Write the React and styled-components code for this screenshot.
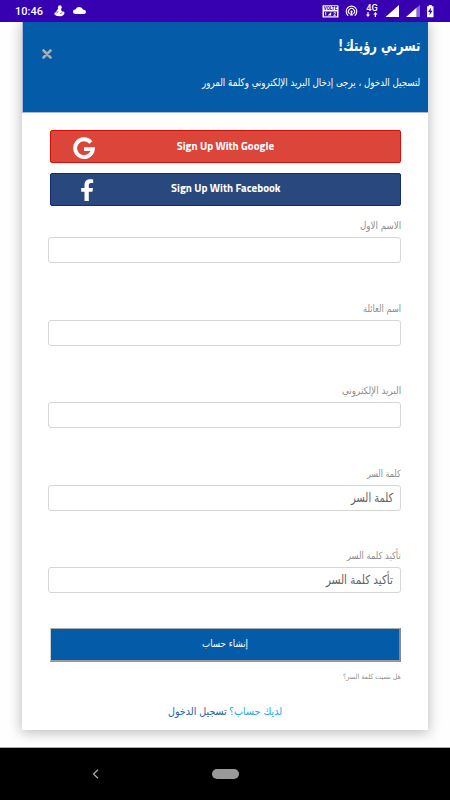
import React, { useLayoutEffect, useRef, useState } from 'react';
import styled, { createGlobalStyle } from 'styled-components';

const GlobalStyle = createGlobalStyle`
  * { box-sizing: border-box; }
  body { margin: 0; background: #fff; font-family: "DejaVu Sans", sans-serif; overflow: hidden; }
  button, input { font-family: inherit; }
`;

const Screen = styled.div`
  width: 450px;
  height: 800px;
  display: flex;
  flex-direction: column;
  background: #fefefe;
  overflow: hidden;
`;

const StatusBar = styled.header`
  height: 22px;
  flex: none;
  display: flex;
  align-items: center;
  background: #3700b0;
  color: #fff;
  padding: 0 15px;
  position: relative;
  z-index: 1;
`;

const Clock = styled.span`
  width: 40px;
  font: 500 11px/22px Roboto, sans-serif;
  letter-spacing: 0;
  padding-top: 1px;
`;

const StatusIcons = styled.svg`
  display: block;
  flex: none;
  margin-left: ${(p) => p.$gap || 0}px;
`;

const Page = styled.main`
  height: 725px;
  flex: none;
  display: flex;
  justify-content: center;
  align-items: flex-start;
`;

const Card = styled.section`
  width: 406px;
  height: 708px;
  display: flex;
  flex-direction: column;
  background: #fff;
  box-shadow: 0 2px 12px 1px rgba(0, 0, 0, 0.25);
`;

const CardHeader = styled.div`
  height: 90.5px;
  flex: none;
  display: flex;
  align-items: flex-start;
  justify-content: space-between;
  padding: 0 8px 0 19px;
  background: #045ca8;
  border: 1px solid #a9b5dc;
  border-width: 0 0 1px 1px;
  color: #fff;
`;

const CloseButton = styled.button`
  display: block;
  margin: 27px 0 0;
  padding: 0;
  border: 0;
  background: none;
  svg { display: block; }
`;

const Heading = styled.div`
  display: flex;
  flex-direction: column;
  align-items: flex-end;
  padding-top: 12px;
  gap: 15px;
`;

const Body = styled.div`
  display: flex;
  flex-direction: column;
  padding: 17.5px 27px 0 26px;
`;

const SocialButton = styled.button`
  height: 33px;
  margin: 0 0 ${(p) => p.$after}px 2px;
  padding: 0 0 0 ${(p) => p.$inset}px;
  display: grid;
  grid-template-columns: 24px 1fr 45px;
  align-items: center;
  justify-items: center;
  background: ${(p) => p.$fill};
  border: 1px solid ${(p) => p.$edge};
  border-radius: 2px;
  color: #fff;
  svg { display: block; position: relative; top: 1px; }
`;

const Field = styled.label`
  height: 82.5px;
  display: flex;
  flex-direction: column;
  align-items: flex-end;
`;

const LabelRow = styled.span`
  height: 22px;
  display: flex;
  align-items: center;
  color: #8c8c8c;
`;

const InputBox = styled.span`
  width: 100%;
  height: 26px;
  display: flex;
  align-items: center;
  justify-content: flex-end;
  padding: 0 7px;
  background: #fff;
  border: 1px solid #d6d6d6;
  border-radius: 3px;
  color: #626262;
`;

const Submit = styled.button`
  height: 34px;
  margin: 0 0 0 2px;
  padding: 0 0 1px;
  display: flex;
  align-items: center;
  justify-content: center;
  background: #045ca8;
  border: 1px solid #c4c4c4;
  border-width: 1px 2px 2px 1px;
  border-color: #aaa #888 #999 #ccc;
  color: #fff;
`;

const Forgot = styled.a`
  height: 31px;
  display: flex;
  align-items: center;
  justify-content: flex-end;
  color: #929292;
`;

const SignIn = styled.p`
  margin: 9px 0 0;
  height: 20px;
  display: flex;
  align-items: center;
  justify-content: center;
  gap: 3px;
  padding-left: 1px;
`;

const NavBar = styled.nav`
  flex: 1;
  display: flex;
  align-items: center;
  padding-left: 92px;
  background: #000;
  border-top: 1px solid #aaa;
`;

const HomePill = styled.span`
  width: 27px;
  height: 10px;
  margin-left: 113px;
  border-radius: 5px;
  background: #999;
`;

const FitBox = styled.span`
  display: flex;
  justify-content: flex-end;
  flex: none;
  width: ${(p) => p.$width}px;
  height: ${(p) => p.$size * 1.6}px;
  line-height: ${(p) => p.$size * 1.6}px;
  font-size: ${(p) => p.$size}px;
  font-weight: ${(p) => (p.$bold ? 700 : 400)};
  font-family: ${(p) => p.$font || '"DejaVu Sans", sans-serif'};
  color: ${(p) => p.$color || 'inherit'};
`;

const FitInner = styled.span`
  flex: none;
  white-space: nowrap;
  transform-origin: right center;
`;

/* Condenses a single line of text to a given measure. */
function FitText({ width, size, bold, font, color, dir = 'rtl', children }) {
  const ref = useRef(null);
  const [scale, setScale] = useState(1);
  useLayoutEffect(() => {
    setScale(width / ref.current.offsetWidth);
  }, [width, children]);
  return (
    <FitBox $width={width} $size={size} $bold={bold} $font={font} $color={color}>
      <FitInner ref={ref} dir={dir} style={{ transform: `scaleX(${scale})` }}>{children}</FitInner>
    </FitBox>
  );
}

const fields = [
  { label: 'الاسم الاول', width: 41 },
  { label: 'اسم العائلة', width: 38 },
  { label: 'البريد الإلكتروني', width: 59 },
  { label: 'كلمة السر', width: 34, hint: 'كلمة السر', hintWidth: 42 },
  { label: 'تأكيد كلمة السر', width: 54, hint: 'تأكيد كلمة السر', hintWidth: 67 },
];

const latin = '"Titillium Web", "Noto Sans", sans-serif';

export default function App() {
  return (
    <>
      <GlobalStyle />
      <Screen>
        <StatusBar>
          <Clock>10:46</Clock>
          <StatusIcons width="34" height="22" viewBox="54.5 0 34 22" fill="#fff">
            <circle cx="60.3" cy="7.2" r="1.9" />
            <path d="M59 8h2.6l.2 2.4 1 1.2 1.9.2.3 1.4-1.2 2-2.2 1-4.2-.1-2.5-1.5.2-1.8 1.5-.9.9-1.7z" />
            <path d="M57 13l2-1.7M60.8 13.5l2.1-.7" stroke="#3700b0" strokeWidth=".7" />
            <path d="M75.6 14a2.3 2.3 0 0 1 .3-4.6A4.2 4.2 0 0 1 83.6 9.8a2.1 2.1 0 0 1 1.3 4.2z" />
          </StatusIcons>
          <StatusIcons $gap={233} width="114" height="22" viewBox="322 0 114 22" fill="#fff">
            <rect x="323.5" y="5.2" width="16" height="12.3" rx=".6" />
            <text x="324.8" y="10" fontSize="4.9" fontWeight="800" fontFamily="Roboto" fill="#3700b0" textLength="13.4" lengthAdjust="spacingAndGlyphs">VOLTE</text>
            <path d="M325 11.5h13v4.8h-13z" fill="#3700b0" />
            <path d="M326.3 12h.9v3.6h-.9zM328.5 15.6l3.7-3.6v3.6z" />
            <text x="334.2" y="15.8" fontSize="4.8" fontWeight="700" fontFamily="Roboto">2</text>
            <g fill="none" stroke="#fff" strokeWidth="1.1" strokeLinecap="round">
              <path d="M348.9 15.3a5.3 5.3 0 1 1 7.2 0M350.3 13.7a3.1 3.1 0 1 1 4.4 0" />
            </g>
            <path d="M352.5 10.4a1.2 1.2 0 0 1 .6 2.2l.9 2.8h-3l.9-2.8a1.2 1.2 0 0 1 .6-2.2z" />
            <text x="367.3" y="10.8" fontSize="8.5" fontWeight="500" fontFamily="Roboto" textLength="11.5" lengthAdjust="spacingAndGlyphs">4G</text>
            <path d="M368.4 12h1.2v2.4h1.5l-2.1 2.5-2.1-2.5h1.5zM377 17h-1.2v-2.4h-1.5l2.1-2.5 2.1 2.5H377z" />
            <path d="M386.5 17L400 5v12zM407 17L417.5 7.8V17z" />
            <path d="M417.5 17V7.8L421 5v12z" opacity=".4" />
            <path d="M429.8 5h3v1.2h1.7v11h-6.4v-11h1.7z" />
            <path d="M431.9 7.5l-2.8 4.4h1.8l-.5 3.6 3.1-4.7h-1.8z" fill="#3700b0" />
          </StatusIcons>
        </StatusBar>
        <Page>
          <Card>
            <CardHeader>
              <CloseButton aria-label="إغلاق">
                <svg width="10" height="10" viewBox="0 0 10 10" stroke="#aaa" strokeWidth="2.6" strokeLinecap="round">
                  <path d="M1.5 1.5l7 7M8.5 1.5l-7 7" />
                </svg>
              </CloseButton>
              <Heading>
                <FitText width={82} size={15.5} bold>تسرني رؤيتك!</FitText>
                <FitText width={218} size={10.5}>لتسجيل الدخول ، يرجى إدخال البريد الإلكتروني وكلمة المرور</FitText>
              </Heading>
            </CardHeader>
            <Body>
              <SocialButton $fill="#dc4539" $edge="#dd0b08" $after={9.5} $inset={21}>
                <svg width="24" height="24" viewBox="0 0 24 24" fill="none" stroke="#fff" strokeWidth="3.9">
                  <path d="M18.9 6.5A8.9 8.9 0 1 0 20.9 13.1H12" />
                </svg>
                <FitText width={97} size={11} bold font={latin} dir="ltr">Sign Up With Google</FitText>
              </SocialButton>
              <SocialButton $fill="#29487d" $edge="#142c68" $after={9.5} $inset={22}>
                <svg width="24" height="24" viewBox="0 0 24 24" fill="#fff">
                  <path d="M11.5 23V13.7H8.2v-3.7h3.3V7c0-3.9 2.2-5.7 5.6-5.7 1.4 0 2.7.1 3.1.2v3.5h-2c-1.7 0-2.4.9-2.4 2.2V10h4.2l-.6 3.7h-3.6V23z" />
                </svg>
                <FitText width={109} size={11} bold font={latin} dir="ltr">Sign Up With Facebook</FitText>
              </SocialButton>
              {fields.map((f) => (
                <Field key={f.label}>
                  <LabelRow><FitText width={f.width} size={10}>{f.label}</FitText></LabelRow>
                  <InputBox>
                    {f.hint && <FitText width={f.hintWidth} size={12.5}>{f.hint}</FitText>}
                  </InputBox>
                </Field>
              ))}
              <Submit><FitText width={46} size={10}>إنشاء حساب</FitText></Submit>
              <Forgot><FitText width={58} size={7.2}>هل نسيت كلمة السر؟</FitText></Forgot>
              <SignIn>
                <FitText width={59} size={11} color="#235fa8">تسجيل الدخول</FitText>
                <FitText width={53} size={11} color="#21a9dc">لديك حساب؟</FitText>
              </SignIn>
            </Body>
          </Card>
        </Page>
        <NavBar>
          <svg width="7" height="10" viewBox="0 0 7 10" fill="none" stroke="#aaa" strokeWidth="1.3"><path d="M6 .8L1.5 5 6 9.2" /></svg>
          <HomePill />
        </NavBar>
      </Screen>
    </>
  );
}
